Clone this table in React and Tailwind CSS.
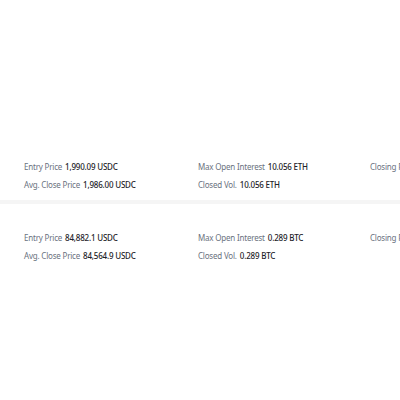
import React from "react";

const positions = [
  {
    entry: "1,990.09 USDC",
    close: "1,986.00 USDC",
    maxOi: "10.056 ETH",
    vol: "10.056 ETH",
  },
  {
    entry: "84,882.1 USDC",
    close: "84,564.9 USDC",
    maxOi: "0.289 BTC",
    vol: "0.289 BTC",
  },
];

function Field({ label, value }) {
  return (
    <div className="h-[18px] flex items-center whitespace-nowrap">
      <span className="text-[#6a7280]">{label}</span>
      {value && <span className="ml-[3px] text-[#1e2329] font-medium">{value}</span>}
    </div>
  );
}

export default function App() {
  return (
    <div
      className="w-[400px] h-[400px] overflow-hidden bg-white text-[8px] tracking-[-0.2px]"
      style={{ fontFamily: '"Noto Sans", "Open Sans", sans-serif' }}
    >
      <div className="h-[133px]" />
      {positions.map((p, i) => (
        <div
          key={i}
          className={
            i === 0
              ? "pt-[25px] pb-[6px] border-b-4 border-[#f5f5f5]"
              : "pt-[25px] pb-[10px]"
          }
        >
          <div className="flex pl-6">
            <div className="w-[174px] shrink-0">
              <Field label="Entry Price" value={p.entry} />
              <Field label="Avg. Close Price" value={p.close} />
            </div>
            <div className="w-[172px] shrink-0">
              <Field label="Max Open Interest" value={p.maxOi} />
              <Field label="Closed Vol." value={p.vol} />
            </div>
            <div className="shrink-0">
              <Field label="Closing PNL" />
            </div>
          </div>
        </div>
      ))}
    </div>
  );
}
